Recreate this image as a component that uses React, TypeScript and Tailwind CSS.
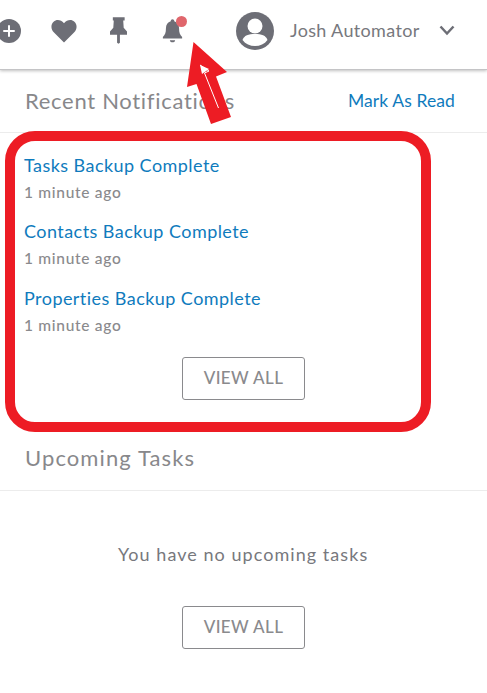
const font = { fontFamily: '"Lato", "Liberation Sans", sans-serif' };

function Item({ title, mb }: { title: string; mb: string }) {
  return (
    <div className={mb}>
      <div className="text-[18px] leading-[22px] tracking-[0.45px] text-[#0f7bbd]">{title}</div>
      <div className="mt-[5px] text-[15.5px] leading-[22px] font-medium tracking-[0.7px] text-[#8a8a8d]">1 minute ago</div>
    </div>
  );
}

function ViewAll() {
  return (
    <button className="flex h-[43px] w-[123px] items-center justify-center rounded-[3px] border border-[#8a8a8d] bg-white pb-[1px] text-[17px] font-medium tracking-[0.4px] text-[#8a8a8d]">
      VIEW ALL
    </button>
  );
}

export default function App() {
  return (
    <div className="relative h-[693px] w-[487px] overflow-hidden bg-white" style={font}>
      <header className="flex h-[70px] items-center border-b border-[#c4c4c6] pb-[8px] shadow-[0_1px_3px_rgba(0,0,0,0.25)]">
        <div className="-ml-[3px] flex h-[24px] w-[24px] items-center justify-center rounded-full bg-[#6d6e76]">
          <svg width="12" height="12" viewBox="0 0 12 12"><path d="M6 1v10M1 6h10" stroke="#fff" strokeWidth="2" strokeLinecap="round" /></svg>
        </div>
        <svg className="ml-[30px]" width="26" height="24" viewBox="0 0 26 24">
          <path d="M13 23.500 3 13.500C-.5 10-.2 5.200 2.600 2.700 5.600.1 10 .8 13 4.200 16 .8 20.400.1 23.400 2.700c2.800 2.500 3.100 7.300-.4 10.800z" fill="#6d6e76" />
        </svg>
        <svg className="ml-[33px]" width="17" height="27" viewBox="0 0 18 28">
          <path d="M3 0h12.500v3.500H14L14.500 11 18 15v3.500H10.500V27L9 28 7.500 27V18.500H0V15l3.500-4L4 3.500H3z" fill="#6d6e76" />
        </svg>
        <div className="relative ml-[35px] h-[25px] w-[21px]">
          <svg width="21" height="25" viewBox="0 0 24 28">
            <path d="M12 1c1.200 0 2 .9 2 2v.5c3.500 1 5.500 4 5.500 8 0 5 1 7.500 3.500 10v1.500H1V21.500c2.500-2.500 3.500-5 3.500-10 0-4 2-7 5.500-8V3c0-1.100.8-2 2-2zM9 25h6c0 1.500-1.300 2.500-3 2.500S9 26.500 9 25z" fill="#6d6e76" />
          </svg>
          <span className="absolute -top-[2px] left-[14px] h-[11px] w-[11px] rounded-full bg-[#e0666c]" />
        </div>
        <svg className="ml-[53px]" width="38" height="38" viewBox="0 0 38 38">
          <circle cx="19" cy="19" r="19" fill="#6d6e76" />
          <circle cx="19" cy="14" r="7.500" fill="#fff" />
          <path d="M6.500 28c1.500-4.500 6-6 12.500-6s11 1.500 12.500 6c-3 4-7.500 6-12.500 6s-9.500-2-12.500-6z" fill="#fff" />
        </svg>
        <span className="ml-[16px] text-[18px] tracking-[0.35px] text-[#77787d]">Josh Automator</span>
        <svg className="ml-[19px]" width="16" height="11" viewBox="0 0 16 11">
          <path d="M1.500 1.500 8 8.500l6.500-7" fill="none" stroke="#6d6e76" strokeWidth="2.500" />
        </svg>
      </header>

      <section>
        <div className="flex h-[63px] items-center justify-between border-b border-[#ececec] pl-[25px] pr-[32px]">
          <h2 className="pb-[2px] text-[22px] font-normal tracking-[0.7px] text-[#88888b]">Recent Notifications</h2>
          <a className="text-[17.5px] tracking-[0.1px] text-[#0f7bbd]">Mark As Read</a>
        </div>
        <div className="pl-[24px] pt-[21px]">
          <Item title="Tasks Backup Complete" mb="mb-[17px]" />
          <Item title="Contacts Backup Complete" mb="mb-[18px]" />
          <Item title="Properties Backup Complete" mb="mb-[21px]" />
        </div>
        <div className="flex pl-[182px]"><ViewAll /></div>
      </section>

      <section className="mt-[43px]">
        <h2 className="h-[48px] border-b border-[#ececec] pl-[25px] text-[22px] font-normal leading-[30px] tracking-[1.1px] text-[#88888b]">Upcoming Tasks</h2>
        <p className="mt-[51px] pl-[118px] text-[18px] leading-[24px] tracking-[1.05px] text-[#77787d]">You have no upcoming tasks</p>
        <div className="mt-[40px] flex pl-[182px]"><ViewAll /></div>
      </section>

      <div className="pointer-events-none absolute left-[5px] top-[131px] h-[301px] w-[426px] rounded-[30px] border-[10px] border-[#ed1c24]" />
      <svg className="pointer-events-none absolute left-[180px] top-[40px]" width="60" height="85" viewBox="0 0 60 85">
        <path d="M13.500 2 47 32 36 36.500 51 77 31 84 16.500 44 7 47z" fill="#ed1c24" />
        <path d="M20 25 29 31 24.500 33 38.500 68" fill="none" stroke="#fff" strokeWidth="1" />
        <path d="M20 25 29 29 22 34z" fill="#fff" />
      </svg>
    </div>
  );
}
